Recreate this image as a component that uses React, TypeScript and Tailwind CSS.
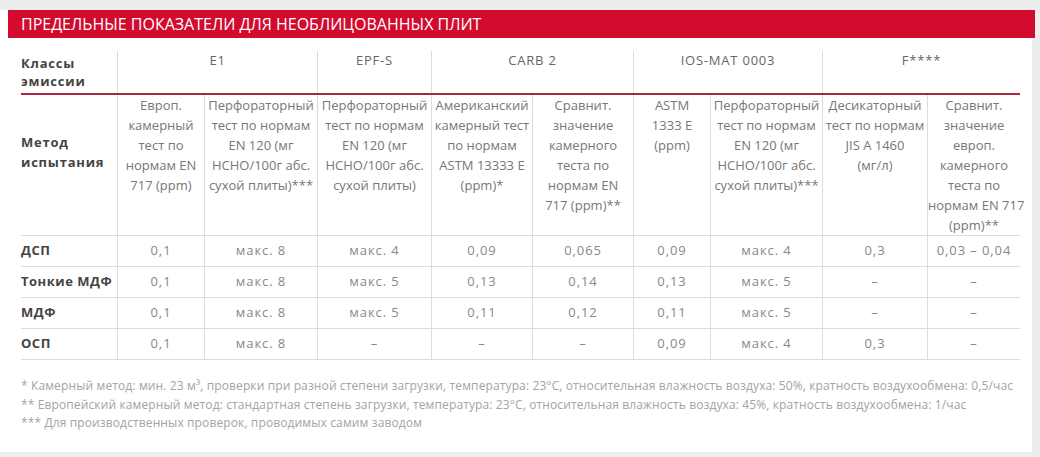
import React from 'react';

const cols = 'grid grid-cols-[96px_87px_113px_114px_101px_101px_77px_112px_105px_93px]';

const groups = [
    { name: 'E1', span: 'col-span-2' },
    { name: 'EPF-S', span: 'col-span-1' },
    { name: 'CARB 2', span: 'col-span-2' },
    { name: 'IOS-MAT 0003', span: 'col-span-2' },
    { name: 'F****', span: 'col-span-2' },
];

const methods: string[][] = [
    ['Европ.', 'камерный', 'тест по', 'нормам EN', '717 (ppm)'],
    ['Перфораторный', 'тест по нормам', 'EN 120 (мг', 'HCHO/100г абс.', 'сухой плиты)***'],
    ['Перфораторный', 'тест по нормам', 'EN 120 (мг', 'HCHO/100г абс.', 'сухой плиты)'],
    ['Американский', 'камерный тест', 'по нормам', 'ASTM 13333 E', '(ppm)*'],
    ['Сравнит.', 'значение', 'камерного', 'теста по', 'нормам EN', '717 (ppm)**'],
    ['ASTM', '1333 E', '(ppm)'],
    ['Перфораторный', 'тест по нормам', 'EN 120 (мг', 'HCHO/100г абс.', 'сухой плиты)***'],
    ['Десикаторный', 'тест по нормам', 'JIS A 1460', '(мг/л)'],
    ['Сравнит.', 'значение', 'европ.', 'камерного', 'теста по', 'нормам EN 717', '(ppm)**'],
];

const rows: { label: string; values: string[] }[] = [
    { label: 'ДСП', values: ['0,1', 'макс. 8', 'макс. 4', '0,09', '0,065', '0,09', 'макс. 4', '0,3', '0,03 – 0,04'] },
    { label: 'Тонкие МДФ', values: ['0,1', 'макс. 8', 'макс. 5', '0,13', '0,14', '0,13', 'макс. 5', '–', '–'] },
    { label: 'МДФ', values: ['0,1', 'макс. 8', 'макс. 5', '0,11', '0,12', '0,11', 'макс. 5', '–', '–'] },
    { label: 'ОСП', values: ['0,1', 'макс. 8', '–', '–', '–', '0,09', 'макс. 4', '0,3', '–'] },
];

const App: React.FC = () => {
    return (
        <div className="w-[1040px] h-[457px] bg-[#ededed] pt-[10px] overflow-hidden font-['Open_Sans',sans-serif]">
            <div className="w-[1032px] h-[442px] bg-white">
                <div className="ml-2 w-[1027px] h-[28px] bg-[#d20a2e] flex items-center pl-[13px]">
                    <h2 className="text-white text-[16px] leading-none">ПРЕДЕЛЬНЫЕ ПОКАЗАТЕЛИ ДЛЯ НЕОБЛИЦОВАННЫХ ПЛИТ</h2>
                </div>

                <div className="ml-[21px] mt-[13px] w-[999px]">
                    {/* group header */}
                    <div className={`${cols} h-[44px] border-b-2 border-[#a92a40]`}>
                        <div className="pt-[3px] text-[13px] leading-[18px] font-bold text-[#444] tracking-[0.06em]">
                            Классы<br />эмиссии
                        </div>
                        {groups.map((g) => (
                            <div key={g.name} className={`${g.span} border-l border-[#dcdcdc] text-center text-[13px] leading-[18px] text-[#666] tracking-[0.06em]`}>
                                {g.name}
                            </div>
                        ))}
                    </div>

                    {/* method row */}
                    <div className={`${cols} h-[141px] border-b border-[#dcdcdc]`}>
                        <div className="pt-[37px] text-[13px] leading-[20px] font-bold text-[#444] tracking-[0.06em]">
                            Метод<br />испытания
                        </div>
                        {methods.map((m, i) => (
                            <div key={i} className="border-l border-[#dcdcdc] text-center text-[13px] leading-[20px] text-[#777] whitespace-nowrap">
                                {m.map((line, j) => (
                                    <div key={j}>{line}</div>
                                ))}
                            </div>
                        ))}
                    </div>

                    {/* data rows */}
                    {rows.map((r) => (
                        <div key={r.label} className={`${cols} h-[31px] border-b border-[#dcdcdc]`}>
                            <div className="flex items-center text-[13px] font-bold text-[#444] tracking-[0.04em]">{r.label}</div>
                            {r.values.map((v, i) => (
                                <div key={i} className="border-l border-[#dcdcdc] flex items-center justify-center text-[13px] text-[#888] tracking-[0.07em]">
                                    {v}
                                </div>
                            ))}
                        </div>
                    ))}
                </div>

                <div className="ml-[21px] mt-[17px] text-[12px] leading-[18.5px] text-[#a3a3a3] tracking-[0.01em]">
                    <p>* Камерный метод: мин. 23 м³, проверки при разной степени загрузки, температура: 23°C, относительная влажность воздуха: 50%, кратность воздухообмена: 0,5/час</p>
                    <p>** Европейский камерный метод: стандартная степень загрузки, температура: 23°C, относительная влажность воздуха: 45%, кратность воздухообмена: 1/час</p>
                    <p>*** Для производственных проверок, проводимых самим заводом</p>
                </div>
            </div>
        </div>
    );
};

export default App;
